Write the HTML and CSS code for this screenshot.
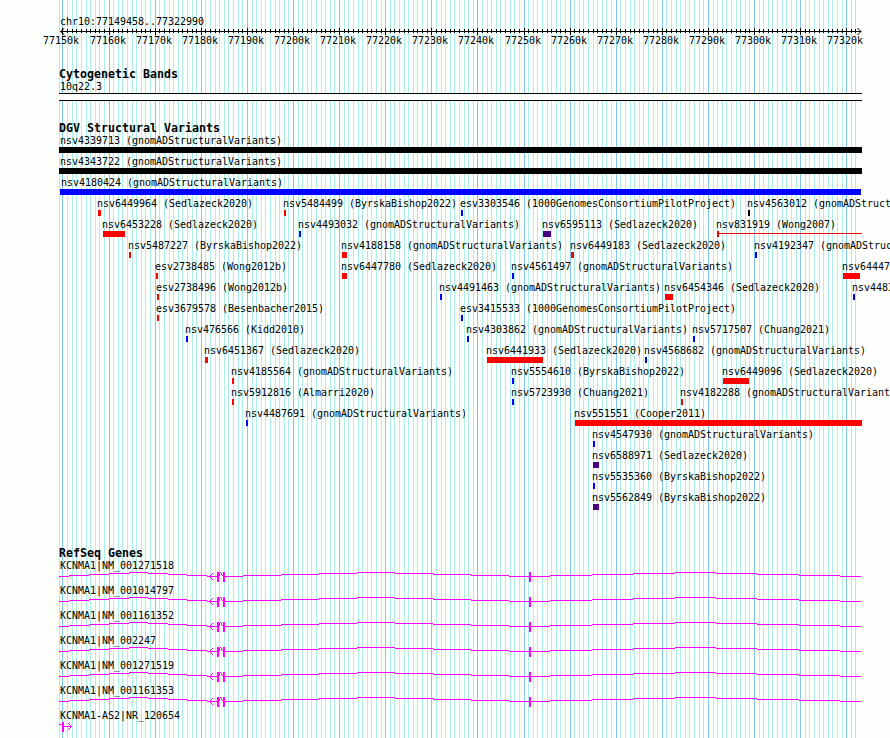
FILE: index.html
```html
<!DOCTYPE html>
<html>
<head>
  <meta charset="utf-8">
  <title>chr10:77149458..77322990</title>
  <link rel="stylesheet" href="styles.css">
</head>
<body>
  <div id="browser">
    <svg class="grid" width="890" height="738">
      <path id="grid-minor" class="minor"></path>
      <path id="grid-major" class="major"></path>
    </svg>

    <div class="ruler">
      <div class="label">chr10:77149458..77322990</div>
      <svg class="scale" width="890" height="8">
        <path id="ticks" d="M60 3.5H861"></path>
        <path class="arrow" d="M64.5 0L60.5 3.5L64.5 7M857.5 0L861 3.5L857.5 7"></path>
      </svg>
      <div id="tick-labels"></div>
    </div>

    <div class="track cytoband">
      <h2>Cytogenetic Bands</h2>
      <div class="label">10q22.3</div>
      <div class="band"></div>
    </div>

    <div class="track variants">
      <h2>DGV Structural Variants</h2>
      <div id="variant-rows"></div>
    </div>

    <div class="track genes">
      <h2>RefSeq Genes</h2>
      <div id="gene-rows"></div>
    </div>
  </div>
  <script src="script.js"></script>
</body>
</html>
```
FILE: styles.css
```css
body {
  margin: 0;
  background-color: #fdfffc;
  color: #000;
  font-family: "DejaVu Sans Mono", monospace;
  font-size: 10px;
  line-height: 12px;
  overflow: hidden;
}
#browser {
  position: relative;
  width: 890px;
  height: 738px;
  overflow: hidden;
}
svg {
  display: block;
  fill: none;
  shape-rendering: crispEdges;
}
.grid {
  position: absolute;
  top: 0;
  left: 0;
}
.minor {
  stroke: #afeeeb;
}
.major {
  stroke: #82c8eb;
}
.ruler,
.track {
  position: relative;
}
h2 {
  margin: 0;
  padding-left: 59px;
  height: 12px;
  font-size: 11.63px;
  line-height: 12px;
  white-space: pre;
}
.label {
  padding-left: 60px;
  height: 12px;
  line-height: 14px;
  letter-spacing: -0.02px;
  white-space: pre;
}

/* Ruler */
.ruler {
  height: 68px;
  padding-top: 15px;
  box-sizing: border-box;
}
.scale {
  margin-top: 1px;
  stroke: #000;
}
.arrow {
  shape-rendering: auto;
}
#tick-labels {
  position: relative;
  height: 12px;
  margin-top: -1px;
}
#tick-labels span {
  position: absolute;
  top: 0;
  letter-spacing: -0.02px;
}

/* Cytogenetic band */
.cytoband {
  height: 54px;
}
.band {
  width: 803px;
  height: 6px;
  margin: 1px 0 0 59px;
  border-top: 1px solid #000;
  border-bottom: 1px solid #000;
  background-color: #fdfffc;
}

/* Structural variants */
.variants {
  height: 425px;
}
.row {
  position: relative;
  height: 21px;
}
.feature {
  position: absolute;
  top: 0;
  line-height: 14px;
  text-indent: -1px;
  white-space: pre;
  letter-spacing: -0.02px;
}
.spanning {
  text-indent: 1px;
}
.bar {
  height: 6px;
  margin-top: -1px;
}
.black {
  background-color: #000;
}
.blue {
  background-color: #00f;
}
.red {
  background-color: #f00;
}
.purple {
  background-color: #4b0082;
}
.tail::after {
  content: "";
  display: block;
  width: 145px;
  height: 1px;
  background-color: #f00;
  position: relative;
  top: 2px;
}

/* Genes */
.gene {
  height: 25px;
}
.gene svg {
  stroke: #f0f;
}
.gene .exon {
  fill: #f0f;
  stroke: none;
}
```
FILE: script.js
```js
const regionStart = 77149458;
const regionEnd = 77322990;
const panelLeft = 60;
const panelWidth = 800;

// Convert a base position to a pixel column
function toPixel(base) {
  return Math.round(panelLeft + (base - regionStart) * panelWidth / (regionEnd - regionStart));
}

// Each row: [left, bar width, colour, label]
const variantRows = [
  [[59, 803, 'black', 'nsv4339713 (gnomADStructuralVariants)']],
  [[59, 803, 'black', 'nsv4343722 (gnomADStructuralVariants)']],
  [[60, 801, 'blue', 'nsv4180424 (gnomADStructuralVariants)']],
  [[98, 3, 'red', 'nsv6449964 (Sedlazeck2020)'], [284, 2, 'red', 'nsv5484499 (ByrskaBishop2022)'], [461, 2, 'blue', 'esv3303546 (1000GenomesConsortiumPilotProject)'], [748, 2, 'black', 'nsv4563012 (gnomADStructuralVariants)']],
  [[103, 22, 'red', 'nsv6453228 (Sedlazeck2020)'], [299, 2, 'blue', 'nsv4493032 (gnomADStructuralVariants)'], [543, 8, 'purple', 'nsv6595113 (Sedlazeck2020)'], [717, 2, 'red tail', 'nsv831919 (Wong2007)']],
  [[129, 2, 'red', 'nsv5487227 (ByrskaBishop2022)'], [342, 5, 'red', 'nsv4188158 (gnomADStructuralVariants)'], [571, 3, 'red', 'nsv6449183 (Sedlazeck2020)'], [755, 2, 'blue', 'nsv4192347 (gnomADStructuralVariants)']],
  [[156, 2, 'red', 'esv2738485 (Wong2012b)'], [342, 5, 'red', 'nsv6447780 (Sedlazeck2020)'], [512, 2, 'blue', 'nsv4561497 (gnomADStructuralVariants)'], [843, 17, 'red', 'nsv6444794 (Sedlazeck2020)']],
  [[157, 2, 'red', 'esv2738496 (Wong2012b)'], [440, 2, 'blue', 'nsv4491463 (gnomADStructuralVariants)'], [665, 8, 'red', 'nsv6454346 (Sedlazeck2020)'], [853, 2, 'blue', 'nsv4483012 (gnomADStructuralVariants)']],
  [[157, 2, 'red', 'esv3679578 (Besenbacher2015)'], [461, 2, 'blue', 'esv3415533 (1000GenomesConsortiumPilotProject)']],
  [[186, 2, 'blue', 'nsv476566 (Kidd2010)'], [467, 2, 'blue', 'nsv4303862 (gnomADStructuralVariants)'], [693, 2, 'blue', 'nsv5717507 (Chuang2021)']],
  [[205, 3, 'red', 'nsv6451367 (Sedlazeck2020)'], [487, 56, 'red', 'nsv6441933 (Sedlazeck2020)'], [645, 2, 'blue', 'nsv4568682 (gnomADStructuralVariants)']],
  [[232, 2, 'red', 'nsv4185564 (gnomADStructuralVariants)'], [512, 2, 'blue', 'nsv5554610 (ByrskaBishop2022)'], [723, 26, 'red', 'nsv6449096 (Sedlazeck2020)']],
  [[232, 2, 'red', 'nsv5912816 (Almarri2020)'], [512, 2, 'blue', 'nsv5723930 (Chuang2021)'], [681, 2, 'red', 'nsv4182288 (gnomADStructuralVariants)']],
  [[246, 2, 'blue', 'nsv4487691 (gnomADStructuralVariants)'], [575, 287, 'red', 'nsv551551 (Cooper2011)']],
  [[593, 2, 'blue', 'nsv4547930 (gnomADStructuralVariants)']],
  [[593, 6, 'purple', 'nsv6588971 (Sedlazeck2020)']],
  [[593, 2, 'blue', 'nsv5535360 (ByrskaBishop2022)']],
  [[593, 6, 'purple', 'nsv5562849 (ByrskaBishop2022)']]
];

const genes = [
  'KCNMA1|NM_001271518',
  'KCNMA1|NM_001014797',
  'KCNMA1|NM_001161352',
  'KCNMA1|NM_002247',
  'KCNMA1|NM_001271519',
  'KCNMA1|NM_001161353'
];

// Gridlines, ruler ticks and tick labels
function renderScale() {
  let minor = 'M59.5 0V738';
  let major = '';
  let ticks = 'M60 3.5H861';
  const tickLabels = document.getElementById('tick-labels');
  for (let base = 77150000; base < 77323000; base += 1000) {
    const x = toPixel(base);
    if (base % 10000 === 0) {
      major += `M${x + 0.5} 0V738`;
      ticks += `M${x + 0.5} 0V7`;
      const label = document.createElement('span');
      label.textContent = `${base / 1000}k`;
      label.style.left = `${x - 19}px`;
      tickLabels.appendChild(label);
    } else {
      minor += `M${x + 0.5} 0V738`;
      ticks += `M${x + 0.5} 1V5`;
    }
  }
  document.getElementById('grid-minor').setAttribute('d', minor);
  document.getElementById('grid-major').setAttribute('d', major);
  document.getElementById('ticks').setAttribute('d', ticks);
}

function renderVariants() {
  const container = document.getElementById('variant-rows');
  variantRows.forEach(features => {
    const row = document.createElement('div');
    row.className = 'row';
    features.forEach(([left, width, colour, name]) => {
      const feature = document.createElement('div');
      feature.className = 'feature';
      // Variants wider than the view keep their label inside the panel
      if (left <= panelLeft) {
        feature.classList.add('spanning');
      }
      feature.style.left = `${left}px`;
      feature.textContent = name;
      const bar = document.createElement('div');
      bar.className = `bar ${colour}`;
      bar.style.width = `${width}px`;
      feature.appendChild(bar);
      row.appendChild(feature);
    });
    container.appendChild(row);
  });
}

// Introns are shallow arches, drawn as one pixel steps
const intronPath = 'M59 5.5H69M69 4.5H89M89 3.5H109M109 2.5H129M129 1.5H148M148 2.5H168M168 3.5H187M187 4.5H207M207 5.5H217' +
  'M225 5.5H243M243 4.5H281M281 3.5H319M319 2.5H357M357 1.5H395M395 2.5H433M433 3.5H471M471 4.5H509M509 5.5H550' +
  'M550 4.5H592M592 3.5H633M633 2.5H675M675 1.5H716M716 2.5H757M757 3.5H799M799 4.5H840M840 5.5H861' +
  'M219.5 2V5M220 1.5H221M221.5 2V4M222.5 4V5';

function renderGenes() {
  const container = document.getElementById('gene-rows');
  genes.forEach(name => {
    container.innerHTML += `
      <div class="gene">
        <div class="label">${name}</div>
        <svg width="890" height="13">
          <path d="${intronPath}"></path>
          <path class="arrow" d="M213 2L209.5 5.5L213 9"></path>
          <path class="exon" d="M217 1h2v10h-2zM223 1h2v10h-2zM529 1h2v10h-2z"></path>
        </svg>
      </div>`;
  });
  container.innerHTML += `
    <div class="gene">
      <div class="label">KCNMA1-AS2|NR_120654</div>
      <svg width="890" height="13">
        <path d="M59 3.5H62M64 5.5H71"></path>
        <path class="arrow" d="M68 2L71.5 5.5L68 9"></path>
        <path class="exon" d="M62 1h2v10h-2z"></path>
      </svg>
    </div>`;
}

renderScale();
renderVariants();
renderGenes();
```
